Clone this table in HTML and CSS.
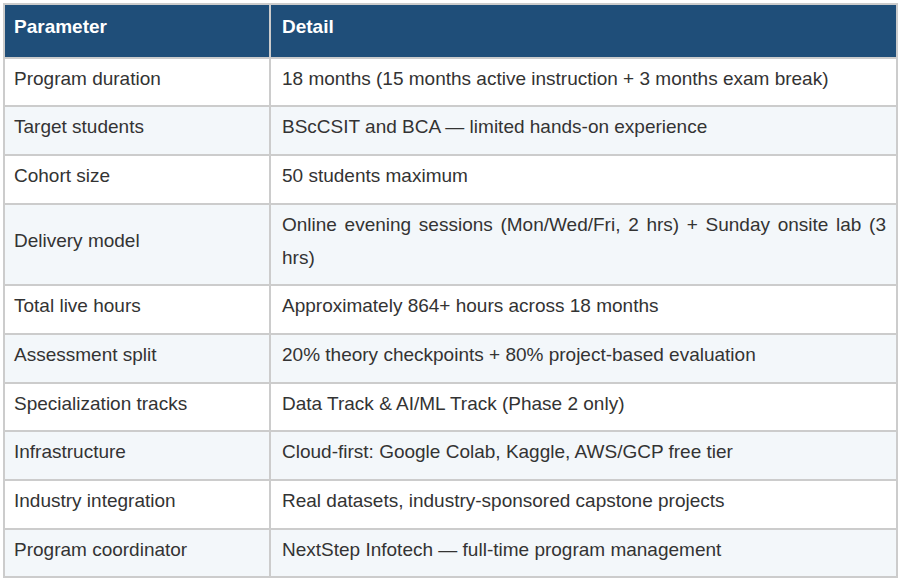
FILE: index.html
```html
<!DOCTYPE html>
<html lang="en">
<head>
<meta charset="utf-8">
<title>Program Parameters</title>
<link rel="stylesheet" href="styles.css">
</head>
<body>
<table class="params">
  <thead>
    <tr><th class="col-param">Parameter</th><th class="col-detail">Detail</th></tr>
  </thead>
  <tbody>
    <tr><td>Program duration</td><td>18 months (15 months active instruction + 3 months exam break)</td></tr>
    <tr><td>Target students</td><td>BScCSIT and BCA — limited hands-on experience</td></tr>
    <tr><td>Cohort size</td><td>50 students maximum</td></tr>
    <tr><td>Delivery model</td><td>Online evening sessions (Mon/Wed/Fri, 2 hrs) + Sunday onsite lab (3 hrs)</td></tr>
    <tr><td>Total live hours</td><td>Approximately 864+ hours across 18 months</td></tr>
    <tr><td>Assessment split</td><td>20% theory checkpoints + 80% project-based evaluation</td></tr>
    <tr><td>Specialization tracks</td><td>Data Track &amp; AI/ML Track (Phase 2 only)</td></tr>
    <tr><td>Infrastructure</td><td>Cloud-first: Google Colab, Kaggle, AWS/GCP free tier</td></tr>
    <tr><td>Industry integration</td><td>Real datasets, industry-sponsored capstone projects</td></tr>
    <tr><td>Program coordinator</td><td>NextStep Infotech — full-time program management</td></tr>
  </tbody>
</table>
</body>
</html>
```
FILE: styles.css
```css
html, body {
  background: #ffffff;
}
body {
  margin: 3px;
  font-family: "Liberation Sans", Arial, sans-serif;
  font-size: 19px;
  line-height: 32.7px;
  color: #333333;
}
.params {
  width: 895px;
  table-layout: fixed;
  border-collapse: separate;
  border-spacing: 0;
  border-top: 2px solid #cccccc;
  border-left: 2px solid #cccccc;
}
.params th,
.params td {
  box-sizing: border-box;
  border-right: 2px solid #cccccc;
  border-bottom: 2px solid #cccccc;
  padding: 4px 10px 10px 11px;
  text-align: justify;
  vertical-align: middle;
}
.params th:first-child,
.params td:first-child {
  padding-left: 9px;
}
.params th {
  background: #1f4e79;
  color: #ffffff;
  font-weight: bold;
  text-align: left;
  padding-top: 6px;
  padding-bottom: 13px;
}
.params .col-param {
  width: 266px;
}
.params tbody tr:nth-child(even) td {
  background: #f3f7fa;
}
```
